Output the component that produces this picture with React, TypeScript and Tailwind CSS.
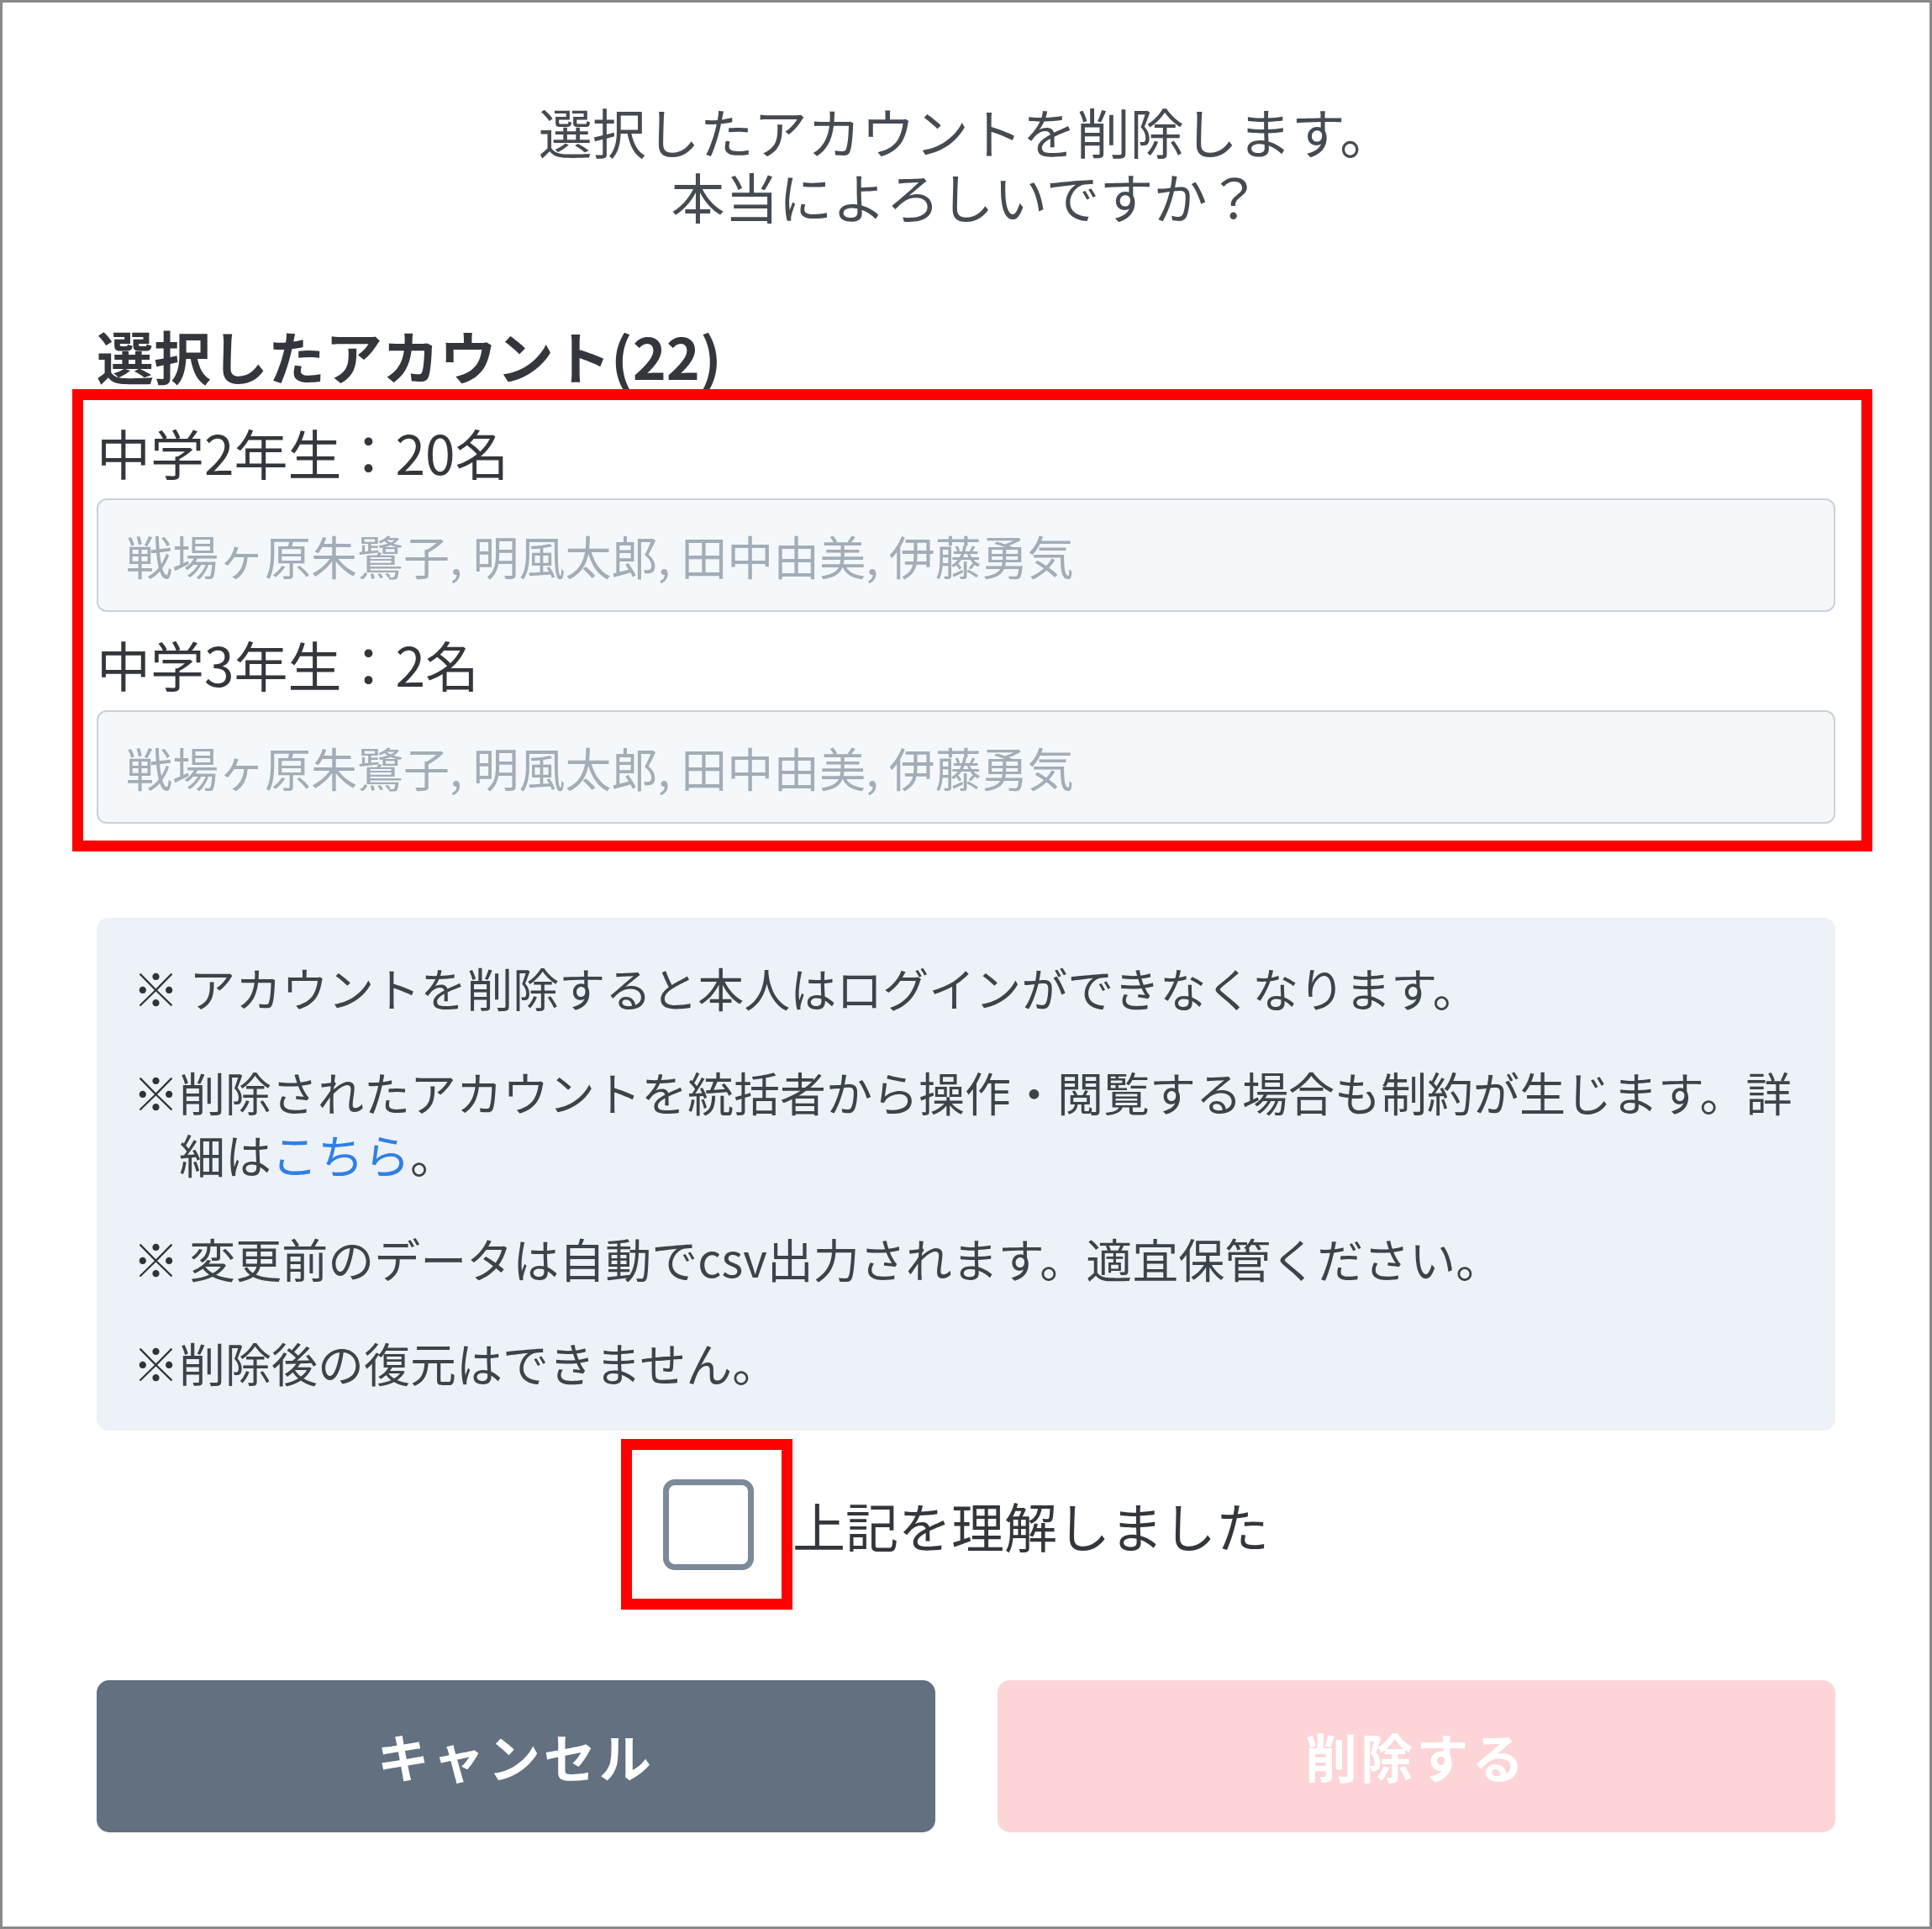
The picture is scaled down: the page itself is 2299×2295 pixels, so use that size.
import { useState } from "react";

const FONT = "font-['Noto_Sans_CJK_JP','Noto_Sans',sans-serif]";

const GROUPS = [
	{ label: "中学2年生：20名", names: "戦場ヶ原朱鷺子, 明風太郎, 田中由美, 伊藤勇気" },
	{ label: "中学3年生：2名", names: "戦場ヶ原朱鷺子, 明風太郎, 田中由美, 伊藤勇気" },
];

export default function App() {
	const [agreed, setAgreed] = useState(false);

	return (
		<div
			className={`${FONT} w-[2299px] h-[2295px] border-[3px] border-[#8a8a8a] bg-white text-[#3b4048] box-border`}
		>
			<div className="px-[112px] pt-[114px] flex flex-col">
				{/* Confirmation message */}
				<p className="text-center text-[64px] leading-[77px] text-[#454b53]">
					選択したアカウントを削除します。
					<br />
					本当によろしいですか？
				</p>

				<h3 className="mt-[111px] text-[68px] leading-[82px] font-bold text-[#33373d]">
					選択したアカウント(22)
				</h3>

				{/* Selected accounts (highlighted) */}
				<div className="-mt-[1px] -ml-[29px] -mr-[44px] border-[13px] border-[#ff0000] pl-[16px] pr-[31px] pt-[17px] pb-[20px]">
					{GROUPS.map((g, i) => (
						<div key={i} className={i > 0 ? "mt-[17px]" : ""}>
							<div className="text-[64px] leading-[88px] text-[#33373d]">
								{g.label}
							</div>
							<div className="mt-[12px] h-[135px] flex items-center rounded-[12px] border-2 border-[#c9d1da] bg-[#f5f8fb] pl-[33px] text-[55px] text-[#a3adb8]">
								{g.names}
							</div>
						</div>
					))}
				</div>

				{/* Notes */}
				<div className="mt-[79px] rounded-[14px] bg-[#edf1f8] px-[43px] py-[45px] text-[55px] leading-[74px] text-[#3d434b] flex flex-col gap-[50px]">
					<p>
						<span className="font-bold text-[#2f343b]">※</span> アカウントを削除すると本人はログインができなくなります。
					</p>
					<p className="flex">
						<span className="shrink-0 font-bold text-[#2f343b]">※</span>
						<span>
							削除されたアカウントを統括者から操作・閲覧する場合も制約が生じます。詳細は
							<a className="text-[#2f80e4]">こちら</a>。
						</span>
					</p>
					<p>
						<span className="font-bold text-[#2f343b]">※</span> 変更前のデータは自動でcsv出力されます。適宜保管ください。
					</p>
					<p className="flex">
						<span className="shrink-0 font-bold text-[#2f343b]">※</span>
						<span>削除後の復元はできません。</span>
					</p>
				</div>

				{/* Agreement checkbox */}
				<div className="mt-[58px] flex justify-center items-center">
					<div className="relative">
						<button
							type="button"
							onClick={() => setAgreed(!agreed)}
							className="block w-[108px] h-[108px] rounded-[14px] border-[7px] border-[#7b8999] bg-white"
						/>
						<div className="absolute -left-[50px] -right-[46px] -top-[48px] -bottom-[47px] border-[13px] border-[#ff0000] pointer-events-none" />
					</div>
					<span className="ml-[46px] text-[63px] leading-[80px] text-[#33373d]">
						上記を理解しました
					</span>
				</div>

				{/* Actions */}
				<div className="mt-[131px] grid grid-cols-2 gap-[74px]">
					<button
						type="button"
						className="h-[181px] rounded-[15px] bg-[#627080] text-white text-[62px] font-bold tracking-[4px]"
					>
						キャンセル
					</button>
					<button
						type="button"
						disabled={!agreed}
						className="h-[181px] rounded-[15px] bg-[#fdd5d7] text-white text-[62px] font-bold tracking-[4px]"
					>
						削除する
					</button>
				</div>
			</div>
		</div>
	);
}
